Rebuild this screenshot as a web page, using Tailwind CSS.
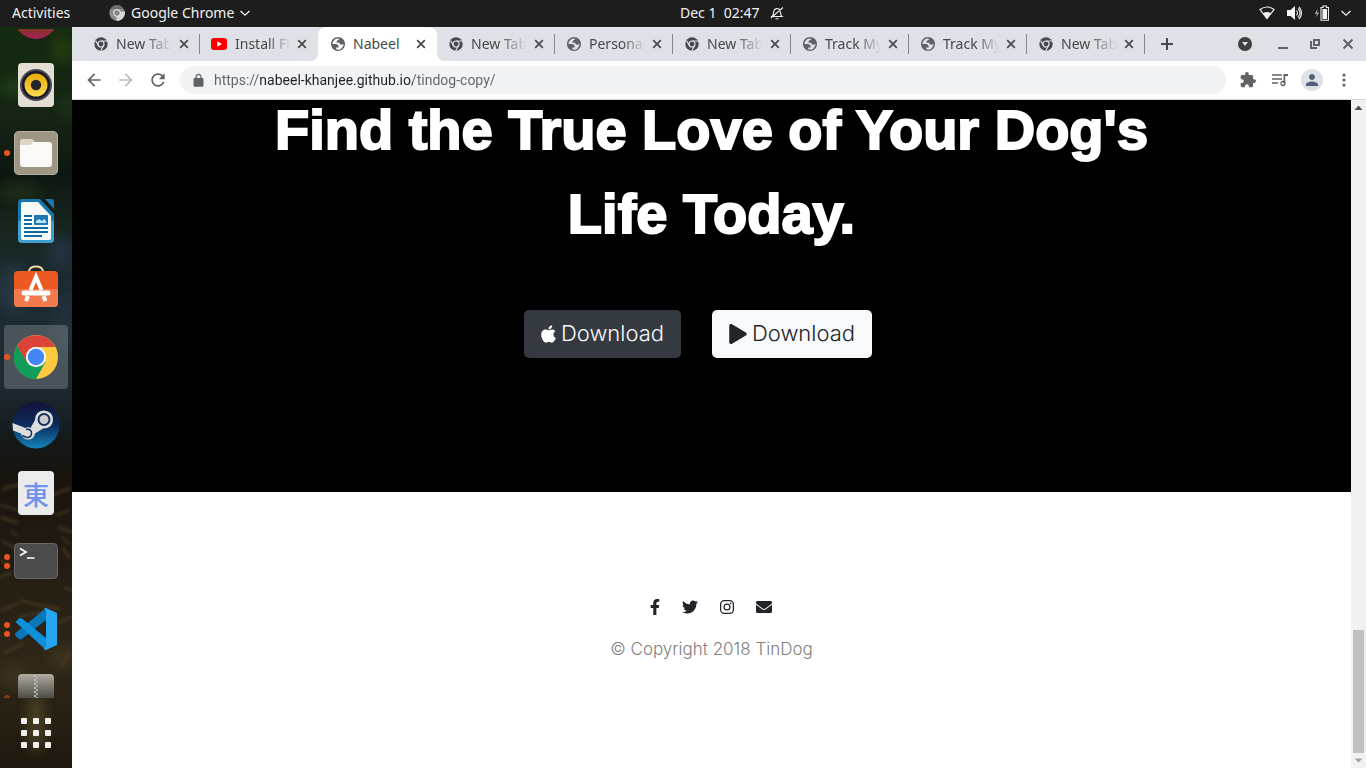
<!DOCTYPE html>
<html lang="en">
<head>
<meta charset="utf-8">
<meta name="viewport" content="width=device-width, initial-scale=1">
<title>TinDog</title>
<script src="https://cdn.jsdelivr.net/npm/@tailwindcss/browser@4"></script>
</head>
<body class="flex h-screen flex-col overflow-hidden bg-[#1d1d1d] font-['Noto_Sans',sans-serif] text-sm">

<!-- Shared symbols -->
<svg class="hidden" aria-hidden="true">
  <symbol id="chrome-mono" viewBox="0 0 24 24">
    <circle cx="12" cy="12" r="11.5" fill="currentColor"/>
    <circle cx="12" cy="12" r="5.200" fill="none" stroke="#dee1e6" stroke-width="2"/>
    <path d="M12 6.800H22.500M7.500 14.600L2.800 6.500M16.500 14.600L11.500 23.500" stroke="#dee1e6" stroke-width="2"/>
  </symbol>
  <symbol id="globe" viewBox="2 2 20 20">
    <path fill="currentColor" fill-rule="evenodd" d="M12 2C6.480 2 2 6.480 2 12s4.480 10 10 10 10-4.480 10-10S17.520 2 12 2zM4 12h4.400c3.407.022 4.922 1.730 4.543 5.127H9.488v2.470a8.004 8.004 0 0 0 10.498-8.083C19.327 12.504 18.332 13 17 13c-2.137 0-3.206-.916-3.206-2.750h-3.748c-.274-2.728.683-4.092 2.870-4.092 0-.975.327-1.597.811-1.970A8 8 0 0 0 4 12z"/>
  </symbol>
  <symbol id="close" viewBox="0 0 16 16"><path d="M4.200 4.200l7.600 7.600M11.800 4.200l-7.600 7.600" stroke="currentColor" stroke-width="1.700" fill="none"/></symbol>
</svg>

<header class="relative flex h-[27px] shrink-0 items-center justify-between bg-[#1d1d1d] pr-[14px] pb-px pl-3 text-[#f2f2f2]">
  <div class="flex items-center">
    <button class="w-[97px] text-left">Activities</button>
    <button class="flex items-center gap-[6px]">
      <svg class="size-4" viewBox="0 0 24 24"><circle cx="12" cy="12" r="11.500" fill="#8b8b8b"/><path d="M12 12L23.500 9A11.500 11.500 0 0 1 11 23.500Z" fill="#d5d5d5"/><path d="M2 6A11.500 11.500 0 0 1 22 6Z" fill="#6e6e6e"/><circle cx="12" cy="12" r="5.500" fill="#ededed"/><circle cx="12" cy="12" r="4" fill="#858585"/></svg>
      <span>Google Chrome</span>
      <svg class="-ml-px size-3" viewBox="0 0 12 12" fill="none" stroke="currentColor" stroke-width="1.300"><path d="M1.500 4L6 8.200 10.500 4"/></svg>
    </button>
  </div>
  <button class="absolute left-1/2 flex -translate-x-[3px] items-center gap-[10px]"><span class="whitespace-pre">Dec 1  02:47</span>
    <svg class="size-[14px]" viewBox="0 0 14 14" fill="none" stroke="currentColor" stroke-width="1.100"><path d="M2 10.500c1.800-1.300 1.300-3 1.700-5C4.100 3.500 5.400 2.500 7 2.500s2.900 1 3.300 3c.4 2-.1 3.700 1.700 5ZM5.500 12.800h3M.8 12.200L13 1.500"/></svg>
  </button>
  <div class="flex items-center gap-[11px]">
    <svg class="h-[14px] w-4" viewBox="0 0 16 14"><path d="M1 3.600Q8-1.600 15 3.600L8 12.500Z" fill="none" stroke="#eee" stroke-width="1.200"/><path d="M4 7.200Q8 4.600 12 7.200L8 12.700Z" fill="#f4f4f4"/></svg>
    <svg class="size-4" viewBox="0 0 16 16"><path d="M1 5h3.500L9 1v14l-4.500-4H1Z" fill="#f4f4f4"/><path d="M10.500 5.500q2 2.500 0 5M12 3.500q4 4.500 0 9M13 1.800q5 6.200 0 12.400" stroke="#ddd" fill="none" stroke-width="1.200"/></svg>
    <svg class="size-4" viewBox="0 0 16 16"><path d="M4.500 4L1.800 8.800H3.800L3.300 12.500 6 7.500H4.200Z" fill="#aaa"/><path d="M8 2.500h2V1h3.500v1.500h2v12.700H8Z" fill="none" stroke="#eee" stroke-width="1.100"/><path d="M9.500 4H14v10H9.500Z" fill="#f4f4f4"/></svg>
    <svg class="size-3" viewBox="0 0 12 12" fill="none" stroke="#eee" stroke-width="1.300"><path d="M1.500 4L6 8.200 10.500 4"/></svg>
  </div>
</header>

<div class="flex min-h-0 flex-1">
  <!-- Dock -->
  <nav class="relative isolate flex w-[72px] shrink-0 flex-col overflow-hidden bg-[#14180f]">
    <svg class="absolute inset-0 -z-10 size-full" viewBox="0 0 72 741" preserveAspectRatio="none" aria-hidden="true">
      <defs>
        <linearGradient id="wall" x2="0" y2="1"><stop offset="0" stop-color="#152b12"/><stop offset=".12" stop-color="#152414"/><stop offset=".2" stop-color="#0d1711"/><stop offset=".27" stop-color="#18261d"/><stop offset=".34" stop-color="#1c2b32"/><stop offset=".48" stop-color="#1d2b33"/><stop offset=".56" stop-color="#141819"/><stop offset=".61" stop-color="#19140e"/><stop offset=".7" stop-color="#211a11"/><stop offset=".86" stop-color="#2f2819"/><stop offset="1" stop-color="#1f180e"/></linearGradient>
        <filter id="soft" x="-50%" y="-50%" width="200%" height="200%"><feGaussianBlur stdDeviation="6"/></filter>
        <filter id="soft2" x="-50%" y="-50%" width="200%" height="200%"><feGaussianBlur stdDeviation="1.500"/></filter>
      </defs>
      <rect width="72" height="741" fill="url(#wall)"/>
      <g filter="url(#soft)">
        <ellipse cx="14" cy="60" rx="14" ry="10" fill="#1e3b14"/><ellipse cx="62" cy="22" rx="10" ry="14" fill="#243a10"/><ellipse cx="66" cy="80" rx="8" ry="12" fill="#1e3018"/><ellipse cx="20" cy="165" rx="22" ry="10" fill="#1b2a18"/>
        <ellipse cx="60" cy="225" rx="12" ry="16" fill="#233340"/><ellipse cx="14" cy="262" rx="14" ry="24" fill="#263843"/><ellipse cx="36" cy="398" rx="20" ry="10" fill="#2b3940"/><ellipse cx="64" cy="300" rx="10" ry="30" fill="#20303b"/>
        <ellipse cx="62" cy="630" rx="12" ry="12" fill="#3b311d"/><ellipse cx="14" cy="650" rx="14" ry="12" fill="#3a301d"/><ellipse cx="36" cy="695" rx="10" ry="30" fill="#453c22"/>
      </g>
      <g filter="url(#soft2)" stroke="#4e3b21" stroke-width="3" opacity=".7">
        <path d="M2 462l22 -6M48 470l22 -9M0 490l18 6M58 500l14 5M2 514l14 8M62 520l8 12M0 550l12 -4M20 574l40 8M0 584l18 -8M58 596l14 -6M4 626l20 -10M62 640l8 -16"/>
      </g>
      <g filter="url(#soft2)" stroke="#6c5434" stroke-width="1.500" opacity=".6"><path d="M0 478l18 5M56 488l14 -5M10 503l8 6M62 510l8 8M0 534l10 2M64 560l8 4M18 590l24 -5"/></g>
    </svg>

    <div class="mt-[2px] min-h-0 flex-1 overflow-hidden">
      <ul class="-mt-[46px]">
        <li class="relative flex h-[68px] items-center justify-center"><svg class="size-[48px]" viewBox="0 0 48 48"><defs><linearGradient id="rb" x2="0" y2="1"><stop offset=".7" stop-color="#7a3d1c"/><stop offset="1" stop-color="#a81c58"/></linearGradient></defs><circle cx="24" cy="24" r="22" fill="url(#rb)"/></svg></li>
        <li class="relative flex h-[68px] items-center justify-center"><svg class="size-[48px]" viewBox="0 0 48 48"><defs><linearGradient id="ye" x2="0" y2="1"><stop stop-color="#e6aa0a"/><stop offset="1" stop-color="#fbdb52"/></linearGradient></defs><rect x="6" y="2" width="36" height="44" rx="4" fill="#e2ded4"/><circle cx="24" cy="24" r="16" fill="#484b57"/><circle cx="24" cy="24" r="14" fill="#181820"/><circle cx="24" cy="24" r="11.500" fill="url(#ye)"/><circle cx="24" cy="24" r="5.200" fill="#26262a"/></svg></li>
        <li class="relative flex h-[68px] items-center justify-center"><i class="absolute left-1 size-[6px] rounded-full bg-[#e95420]"></i><svg class="size-[48px]" viewBox="0 0 48 48"><rect x="2" y="2" width="44" height="44" rx="5" fill="#9e9583"/><rect x="2.500" y="2.500" width="43" height="43" rx="4.500" fill="none" stroke="#b8b09e"/><path d="M8 13q0-3 3-3h8q2 0 3 2l1 2h14v10H8Z" fill="#ddd7c9"/><path d="M8 16h9q2 0 3-1.500t3-1.500h14q3 0 3 3v19q0 3-3 3H11q-3 0-3-3Z" fill="#faf9f7"/></svg></li>
        <li class="relative flex h-[68px] items-center justify-center"><svg class="size-[48px]" viewBox="0 0 48 48"><path d="M10 2h18l14 15v25q0 4-4 4H10q-4 0-4-4V6q0-4 4-4Z" fill="#1876ad"/><path d="M6 24h36v18q0 4-4 4H10q-4 0-4-4Z" fill="#419fd0"/><path d="M11 5h15L39 19v22q0 2-2 2H11q-2 0-2-2V7q0-2 2-2Z" fill="#f8fafa"/><path d="M33 2h6q3 0 3 3v7Z" fill="#1b78b0"/><path d="M12 19h8M12 23h8M12 27h8M12 31h24M12 35h24M12 39h18" stroke="#0d6ba0" stroke-width="2"/><rect x="22" y="18" width="14" height="10" rx="1" fill="#1b78b0"/><path d="M24 26v-2l3-2 3 2 2-2 2 2v2Z" fill="#bfe2f3"/></svg></li>
        <li class="relative flex h-[68px] items-center justify-center"><svg class="size-[48px]" viewBox="0 0 48 48"><path d="M17 8V6q1-4.500 7-4.500T31 6v2" fill="none" stroke="#f5d5a5" stroke-width="2"/><rect x="2" y="6" width="44" height="36" rx="4" fill="#ea5a22"/><path d="M2 24h44v14q0 4-4 4H6q-4 0-4-4Z" fill="#f27a4c"/><path d="M14 36l2-5M33.500 36l-2-5M18.500 25L24 12l5.500 13" fill="none" stroke="#fff" stroke-width="4"/><path d="M12 28h24" stroke="#fff" stroke-width="5" stroke-linecap="round"/></svg></li>
        <li class="relative flex h-[68px] items-center justify-center"><span class="absolute inset-x-1 inset-y-[2px] rounded bg-white/20"></span><i class="absolute left-1 size-[6px] rounded-full bg-[#e95420]"></i><svg class="relative size-[48px]" viewBox="0 0 48 48"><circle cx="24" cy="24" r="22" fill="#fdca3f"/><path d="M24 24L5 13A22 22 0 0 0 24 46L33.500 29Z" fill="#109d58"/><path d="M5 13A22 22 0 0 1 43.500 14H24L14.500 29Z" fill="#db4437"/><path d="M5 13L14.500 29.500 24 46A22 22 0 0 1 5 13Z" fill="#109d58"/><circle cx="24" cy="24" r="10.200" fill="#f3f3f3"/><circle cx="24" cy="24" r="8.200" fill="#4386f5"/></svg></li>
        <li class="relative flex h-[68px] items-center justify-center"><svg class="size-[48px]" viewBox="0 0 48 48"><defs><linearGradient id="st" x2="0" y2="1"><stop stop-color="#11143a"/><stop offset=".5" stop-color="#0b2a5c"/><stop offset="1" stop-color="#1485bb"/></linearGradient></defs><circle cx="24" cy="24" r="23.500" fill="url(#st)"/><path d="M.5 22l13 5q3-1.500 5 0L23 19q0-9 9-9.500 9 1 9 9 0 9-10 9l-8 5q-1 6-7 6-5 0-7-6L1 29.500Z" fill="#ddd"/><circle cx="32" cy="18.500" r="5.500" fill="#ccc" stroke="#14305c" stroke-width="2"/><path d="M14 28.500q6-1 5.500 4.500-1 4-5 3.500l-4-2" fill="none" stroke="#14305c" stroke-width="1.500"/></svg></li>
        <li class="relative flex h-[68px] items-center justify-center"><span class="flex h-11 w-9 items-center justify-center rounded bg-[#ececec] pt-[2px] font-['Noto_Sans_CJK_JP',sans-serif] text-[26px] leading-none font-medium text-[#6f93ee]">東</span></li>
        <li class="relative flex h-[68px] items-center justify-center"><i class="absolute top-[27px] left-1 size-[6px] rounded-full bg-[#e95420]"></i><i class="absolute top-[36px] left-1 size-[6px] rounded-full bg-[#e95420]"></i><svg class="size-[48px]" viewBox="0 0 48 48"><rect x="2.500" y="6.500" width="43" height="35" rx="4" fill="#4b4b4b" stroke="#686868"/><path d="M8 11.500l6 3.500-6 3.500M15 21h7.500" stroke="#fff" stroke-width="1.700" fill="none"/></svg></li>
        <li class="relative flex h-[68px] items-center justify-center"><i class="absolute top-[27px] left-1 size-[6px] rounded-full bg-[#e95420]"></i><i class="absolute top-[36px] left-1 size-[6px] rounded-full bg-[#e95420]"></i><svg class="size-[48px]" viewBox="0 0 48 48"><path d="M34 3v12L10 34q-1.500 1-3 0l-3.500-3q-1.200-1.500 0-3Z" fill="#0877b9"/><path d="M3.500 17L7 13.500q1.500-1 3 0L34 33v12Z" fill="#0f8fd8"/><path d="M34 3l11 5v32l-11 5q-1.500 0-3-1.500Q34 45 34 41V7q0-4-3-2.500Q32.500 3 34 3Z" fill="#25a5f0"/></svg></li>
        <li class="relative flex h-[68px] items-center justify-center"><i class="absolute top-[32px] left-1 size-[6px] rounded-full bg-[#e95420]/50"></i><svg class="size-[48px]" viewBox="0 0 48 48"><defs><linearGradient id="zp" x2="0" y2="1"><stop stop-color="#b0aca2"/><stop offset=".55" stop-color="#4e4b42"/></linearGradient></defs><rect x="6" y="1" width="36" height="44" rx="4" fill="url(#zp)"/><path d="M23 2v43" stroke="#bbb" stroke-width="2" stroke-dasharray="2"/><path d="M25 4v41" stroke="#aaa" stroke-width="2" stroke-dasharray="2"/></svg></li>
      </ul>
    </div>
    <button class="flex h-[70px] shrink-0 items-center justify-center" aria-label="Show applications">
      <span class="grid grid-cols-3 gap-[6px]"><i class="size-[6px] rounded-[1px] bg-[#f0f0ee]"></i><i class="size-[6px] rounded-[1px] bg-[#f0f0ee]"></i><i class="size-[6px] rounded-[1px] bg-[#f0f0ee]"></i><i class="size-[6px] rounded-[1px] bg-[#f0f0ee]"></i><i class="size-[6px] rounded-[1px] bg-[#f0f0ee]"></i><i class="size-[6px] rounded-[1px] bg-[#f0f0ee]"></i><i class="size-[6px] rounded-[1px] bg-[#f0f0ee]"></i><i class="size-[6px] rounded-[1px] bg-[#f0f0ee]"></i><i class="size-[6px] rounded-[1px] bg-[#f0f0ee]"></i></span>
    </button>
  </nav>

  <!-- Browser window -->
  <div class="flex min-w-0 flex-1 flex-col bg-white">
    <div class="flex h-[34px] shrink-0 items-center bg-[#dee1e6] pl-[10px] text-[#45494d]">
      <div class="flex h-full w-[118px] items-center pr-2 pl-3"><svg class="mr-2 size-[14px] shrink-0"><use href="#chrome-mono"/></svg><button class="w-14 overflow-hidden text-left whitespace-nowrap mask-r-from-50% mask-r-to-100%">New Tab</button><button class="ml-1 size-4" aria-label="Close tab"><svg class="size-4"><use href="#close"/></svg></button></div>
      <i class="-ml-px h-5 w-px bg-[#83878c]"></i>
      <div class="flex h-full w-[118px] items-center pr-2 pl-[11px]"><svg class="mr-2 size-4 shrink-0" viewBox="0 0 16 16"><rect y="2" width="16" height="12" rx="3" fill="#f00"/><path d="M6.300 5.300v5.400L11 8Z" fill="#fff"/></svg><button class="w-14 overflow-hidden text-left whitespace-nowrap mask-r-from-60% mask-r-to-100%">Install Flutter</button><button class="ml-1 size-4" aria-label="Close tab"><svg class="size-4"><use href="#close"/></svg></button></div>
      <div class="relative flex h-full w-[119px] items-center rounded-t-lg bg-white pr-2 pl-[13px] before:absolute before:bottom-0 before:-left-2 before:size-2 before:bg-[radial-gradient(circle_at_0_0,transparent_8px,white_8px)] after:absolute after:-right-2 after:bottom-0 after:size-2 after:bg-[radial-gradient(circle_at_100%_0,transparent_8px,white_8px)]"><svg class="mr-2 size-[14px] shrink-0 text-[#5f6368]"><use href="#globe"/></svg><button class="w-14 overflow-hidden text-left whitespace-nowrap">Nabeel</button><button class="ml-1 size-4" aria-label="Close tab"><svg class="size-4"><use href="#close"/></svg></button></div>
      <div class="flex h-full w-[118px] items-center pr-2 pl-3"><svg class="mr-2 size-[14px] shrink-0"><use href="#chrome-mono"/></svg><button class="w-14 overflow-hidden text-left whitespace-nowrap mask-r-from-50% mask-r-to-100%">New Tab</button><button class="ml-1 size-4" aria-label="Close tab"><svg class="size-4"><use href="#close"/></svg></button></div>
      <i class="-ml-px h-5 w-px bg-[#83878c]"></i>
      <div class="flex h-full w-[118px] items-center pr-2 pl-3"><svg class="mr-2 size-[14px] shrink-0 text-[#5f6368]"><use href="#globe"/></svg><button class="w-14 overflow-hidden text-left whitespace-nowrap mask-r-from-60% mask-r-to-100%">Personal Site</button><button class="ml-1 size-4" aria-label="Close tab"><svg class="size-4"><use href="#close"/></svg></button></div>
      <i class="-ml-px h-5 w-px bg-[#83878c]"></i>
      <div class="flex h-full w-[118px] items-center pr-2 pl-3"><svg class="mr-2 size-[14px] shrink-0"><use href="#chrome-mono"/></svg><button class="w-14 overflow-hidden text-left whitespace-nowrap mask-r-from-50% mask-r-to-100%">New Tab</button><button class="ml-1 size-4" aria-label="Close tab"><svg class="size-4"><use href="#close"/></svg></button></div>
      <i class="-ml-px h-5 w-px bg-[#83878c]"></i>
      <div class="flex h-full w-[118px] items-center pr-2 pl-3"><svg class="mr-2 size-[14px] shrink-0 text-[#5f6368]"><use href="#globe"/></svg><button class="w-14 overflow-hidden text-left whitespace-nowrap mask-r-from-60% mask-r-to-100%">Track My</button><button class="ml-1 size-4" aria-label="Close tab"><svg class="size-4"><use href="#close"/></svg></button></div>
      <i class="-ml-px h-5 w-px bg-[#83878c]"></i>
      <div class="flex h-full w-[118px] items-center pr-2 pl-3"><svg class="mr-2 size-[14px] shrink-0 text-[#5f6368]"><use href="#globe"/></svg><button class="w-14 overflow-hidden text-left whitespace-nowrap mask-r-from-60% mask-r-to-100%">Track My</button><button class="ml-1 size-4" aria-label="Close tab"><svg class="size-4"><use href="#close"/></svg></button></div>
      <i class="-ml-px h-5 w-px bg-[#83878c]"></i>
      <div class="flex h-full w-[118px] items-center pr-2 pl-3"><svg class="mr-2 size-[14px] shrink-0"><use href="#chrome-mono"/></svg><button class="w-14 overflow-hidden text-left whitespace-nowrap mask-r-from-50% mask-r-to-100%">New Tab</button><button class="ml-1 size-4" aria-label="Close tab"><svg class="size-4"><use href="#close"/></svg></button></div>
      <i class="-ml-px h-5 w-px bg-[#83878c]"></i>
      <button class="ml-[15px]" aria-label="New tab"><svg class="size-[14px]" viewBox="0 0 14 14"><path d="M7 1v12M1 7h12" stroke="currentColor" stroke-width="2"/></svg></button>
      <div class="ml-auto flex items-center pr-[10px] text-[#5f6368]">
        <button class="mr-[23px]" aria-label="Search tabs"><svg class="size-[14px]" viewBox="0 0 14 14"><circle cx="7" cy="7" r="7" fill="#3c4043"/><path d="M4 5h6L7 9Z" fill="#dee1e6"/></svg></button>
        <button class="mr-4" aria-label="Minimize"><svg class="size-4" viewBox="0 0 16 16"><path d="M3 12h10" stroke="currentColor" stroke-width="2"/></svg></button>
        <button class="mr-[17px]" aria-label="Restore"><svg class="size-4" viewBox="0 0 16 16" fill="none" stroke="currentColor" stroke-width="2"><path d="M7 4h5v5H7ZM4 5v7h6"/></svg></button>
        <button aria-label="Close window"><svg class="size-4" viewBox="0 0 16 16"><path d="M3.500 3.500l9 9M12.500 3.500l-9 9" stroke="currentColor" stroke-width="2"/></svg></button>
      </div>
    </div>

    <div class="flex h-[39px] shrink-0 items-center border-b border-[#d5d7da] px-3 text-[#5f6368]">
      <button aria-label="Back"><svg class="size-5" viewBox="0 0 24 24" fill="currentColor"><path d="M20 11H7.830l5.590-5.590L12 4l-8 8 8 8 1.410-1.410L7.830 13H20z"/></svg></button>
      <button class="ml-3 text-[#babcbe]" aria-label="Forward"><svg class="size-5" viewBox="0 0 24 24" fill="currentColor"><path d="M12 4l-1.410 1.410L16.170 11H4v2h12.170l-5.580 5.590L12 20l8-8z"/></svg></button>
      <button class="ml-3" aria-label="Reload"><svg class="size-5" viewBox="0 0 24 24" fill="currentColor"><path d="M17.650 6.350C16.200 4.900 14.210 4 12 4c-4.420 0-7.990 3.580-7.990 8s3.570 8 7.990 8c3.730 0 6.840-2.550 7.730-6h-2.080c-.82 2.330-3.040 4-5.650 4-3.310 0-6-2.690-6-6s2.690-6 6-6c1.660 0 3.140.69 4.220 1.780L13 11h7V4z"/></svg></button>
      <div class="ml-3 flex h-7 min-w-0 flex-1 items-center rounded-full bg-[#f1f3f4] pl-[11px]">
        <svg class="mr-2 size-[15px] shrink-0" viewBox="0 0 24 24" fill="currentColor"><path d="M18 8h-1V6c0-2.760-2.240-5-5-5S7 3.240 7 6v2H6c-1.100 0-2 .9-2 2v10c0 1.100.9 2 2 2h12c1.100 0 2-.9 2-2V10c0-1.100-.9-2-2-2zM9 6c0-1.660 1.340-3 3-3s3 1.340 3 3v2H9z"/></svg>
        <input type="text" aria-label="Address" value="https://nabeel-khanjee.github.io/tindog-copy/" class="w-full bg-[linear-gradient(to_right,#5f6368_46px,#202124_46px,#202124_199px,#5f6368_199px)] bg-clip-text font-['Roboto',sans-serif] text-transparent outline-none">
      </div>
      <div class="ml-3 flex items-center gap-3">
        <button aria-label="Extensions"><svg class="size-5 p-[2px]" viewBox="1 1 22 22" fill="currentColor"><path d="M20.500 11H19V7c0-1.100-.9-2-2-2h-4V3.500a2.500 2.500 0 0 0-5 0V5H4c-1.100 0-1.990.9-1.990 2v3.800H3.500c1.490 0 2.700 1.210 2.700 2.700s-1.210 2.700-2.700 2.700H2V20c0 1.100.9 2 2 2h3.800v-1.500c0-1.490 1.210-2.700 2.700-2.700s2.700 1.210 2.700 2.700V22H17c1.100 0 2-.9 2-2v-4h1.500a2.500 2.500 0 0 0 0-5z"/></svg></button>
        <button aria-label="Media controls"><svg class="size-5" viewBox="0 0 20 20"><path d="M2 5h10M2 9h10M2 13h6" stroke="currentColor" stroke-width="1.600"/><path d="M13.500 13.500V4H18v2h-2.800v7.500" fill="currentColor"/><circle cx="13" cy="13.500" r="2" fill="none" stroke="currentColor" stroke-width="1.300"/></svg></button>
        <button class="-mx-px flex size-[22px] items-center justify-center rounded-full bg-[#dee1e6]" aria-label="Profile"><svg class="size-[18px]" viewBox="0 0 24 24" fill="#525f77"><path d="M12 12c2.210 0 4-1.790 4-4s-1.790-4-4-4-4 1.790-4 4 1.790 4 4 4zm0 2c-2.670 0-8 1.340-8 4v2h16v-2c0-2.660-5.330-4-8-4z"/></svg></button>
        <button aria-label="Menu"><svg class="size-5" viewBox="0 0 20 20" fill="currentColor"><circle cx="10" cy="5" r="1.600"/><circle cx="10" cy="10" r="1.600"/><circle cx="10" cy="15" r="1.600"/></svg></button>
      </div>
    </div>

    <div class="flex min-h-0 flex-1">
      <main class="flex min-w-0 flex-1 flex-col overflow-hidden bg-white">
        <section class="shrink-0 bg-black pb-[134px] text-center">
          <h1 class="mx-auto -mt-3 max-w-[960px] font-['Liberation_Sans',sans-serif] text-[56px] leading-[84px] font-bold text-white [-webkit-text-stroke:2px_white]">Find the True Love of Your Dog's Life Today.</h1>
          <div class="mt-[54px] flex justify-center gap-[31px] pr-[27px] font-['Inter',sans-serif] text-[22px] font-light">
            <button class="flex h-12 w-[157px] items-center justify-center gap-[5px] rounded-[5px] bg-[#343a40] text-[#f8f9fa]"><svg class="h-5 w-[15px]" viewBox="0 0 384 512" fill="#fff"><path d="M318.700 268.700c-.2-36.700 16.400-64.400 50-84.800-18.800-26.900-47.200-41.700-84.700-44.600-35.500-2.800-74.300 20.700-88.500 20.700-15 0-49.400-19.700-76.400-19.700C63.300 141.200 4 184.800 4 273.500q0 39.300 14.400 81.200c12.800 36.700 59 126.700 107.200 125.200 25.200-.6 43-17.900 75.800-17.900 31.800 0 48.300 17.900 76.400 17.900 48.600-.7 90.400-82.500 102.600-119.300-65.200-30.700-61.700-90-61.700-91.900zm-56.600-164.200c27.300-32.400 24.800-61.900 24-72.500-24.100 1.400-52 16.400-67.900 34.900-17.500 19.800-27.800 44.300-25.600 71.900 26.100 2 49.900-11.400 69.500-34.300z"/></svg>Download</button>
            <button class="flex h-12 w-[160px] items-center justify-center gap-[5px] rounded-[5px] bg-[#f8f9fa] text-[#212529]"><svg class="h-5 w-[18px]" viewBox="0 0 448 512" fill="#212529"><path d="M424.400 214.700L72.400 6.600C43.800-10.300 0 6.100 0 47.900V464c0 37.500 40.700 60.100 72.400 41.300l352-208c31.400-18.500 31.500-64.100 0-82.600z"/></svg>Download</button>
          </div>
        </section>
        <footer class="flex flex-col items-center pt-[107px] text-[#212529]">
          <div class="flex items-center gap-[22px] pr-[2px]">
            <a href="#" aria-label="Facebook"><svg class="h-4 w-[10px]" viewBox="0 0 320 512" fill="currentColor"><path d="M279.140 288l14.220-92.660h-88.910v-60.130c0-25.350 12.420-50.060 52.240-50.060h40.420V6.260S260.430 0 225.360 0c-73.220 0-121.080 44.380-121.080 124.720v70.620H22.890V288h81.390v224h100.170V288z"/></svg></a>
            <a href="#" aria-label="Twitter"><svg class="size-4" viewBox="0 0 512 512" fill="currentColor"><path d="M459.370 151.716c.325 4.548.325 9.097.325 13.645 0 138.720-105.583 298.558-298.558 298.558-59.452 0-114.680-17.219-161.137-47.106 8.447.974 16.568 1.299 25.340 1.299 49.055 0 94.213-16.568 130.274-44.832-46.132-.975-84.792-31.188-98.112-72.772 6.498.974 12.995 1.624 19.818 1.624 9.421 0 18.843-1.300 27.614-3.573-48.081-9.747-84.143-51.980-84.143-102.985v-1.299c13.969 7.797 30.214 12.670 47.431 13.319-28.264-18.843-46.781-51.005-46.781-87.391 0-19.492 5.197-37.360 14.294-52.954 51.655 63.675 129.300 105.258 216.365 109.807-1.624-7.797-2.599-15.918-2.599-24.040 0-57.828 46.782-104.934 104.934-104.934 30.213 0 57.502 12.670 76.670 33.137 23.715-4.548 46.456-13.320 66.599-25.340-7.798 24.366-24.366 44.833-46.132 57.827 21.117-2.273 41.584-8.122 60.426-16.243-14.292 20.791-32.161 39.308-52.628 54.253z"/></svg></a>
            <a href="#" aria-label="Instagram"><svg class="h-4 w-[14px]" viewBox="0 0 448 512" fill="none" stroke="currentColor" stroke-width="40"><rect x="20" y="52" width="408" height="408" rx="115"/><circle cx="224" cy="256" r="95"/><circle cx="343" cy="137" r="27" fill="currentColor" stroke="none"/></svg></a>
            <a href="#" aria-label="Email"><svg class="size-4" viewBox="0 0 512 512" fill="currentColor"><path d="M502.300 190.800c3.900-3.100 9.700-.2 9.700 4.700V400c0 26.500-21.500 48-48 48H48c-26.500 0-48-21.500-48-48V195.600c0-5 5.700-7.800 9.700-4.700 22.400 17.400 52.100 39.500 154.100 113.600 21.100 15.400 56.700 47.800 92.200 47.600 35.700.3 72-32.800 92.300-47.600 102-74.100 131.600-96.300 154-113.700zM256 320c23.200.4 56.600-29.200 73.400-41.400 132.700-96.300 142.800-104.700 173.400-128.700 5.800-4.500 9.200-11.500 9.200-18.900v-19c0-26.500-21.500-48-48-48H48c-26.500 0-48 21.500-48 48v19c0 7.400 3.400 14.300 9.200 18.900 30.600 23.900 40.700 32.400 173.400 128.700 16.800 12.200 50.200 41.800 73.400 41.400z"/></svg></a>
          </div>
          <p class="mt-[22px] font-['Inter',sans-serif] text-[17px] leading-6 font-light text-[#808080]">© Copyright 2018 TinDog</p>
        </footer>
      </main>
      <div class="flex w-[15px] shrink-0 flex-col items-center bg-[#f1f1f1]" aria-hidden="true">
        <svg class="h-[15px] w-[15px] shrink-0" viewBox="0 0 15 15"><path d="M3.500 10L7.500 5.500 11.500 10Z" fill="#505050"/></svg>
        <i class="flex-1"></i>
        <i class="h-[123px] w-[11px] bg-[#c1c1c1]"></i>
        <svg class="h-[15px] w-[15px] shrink-0" viewBox="0 0 15 15"><path d="M3.500 5.500h8L7.500 9.500Z" fill="#a3a3a3"/></svg>
      </div>
    </div>
  </div>
</div>
</body>
</html>
